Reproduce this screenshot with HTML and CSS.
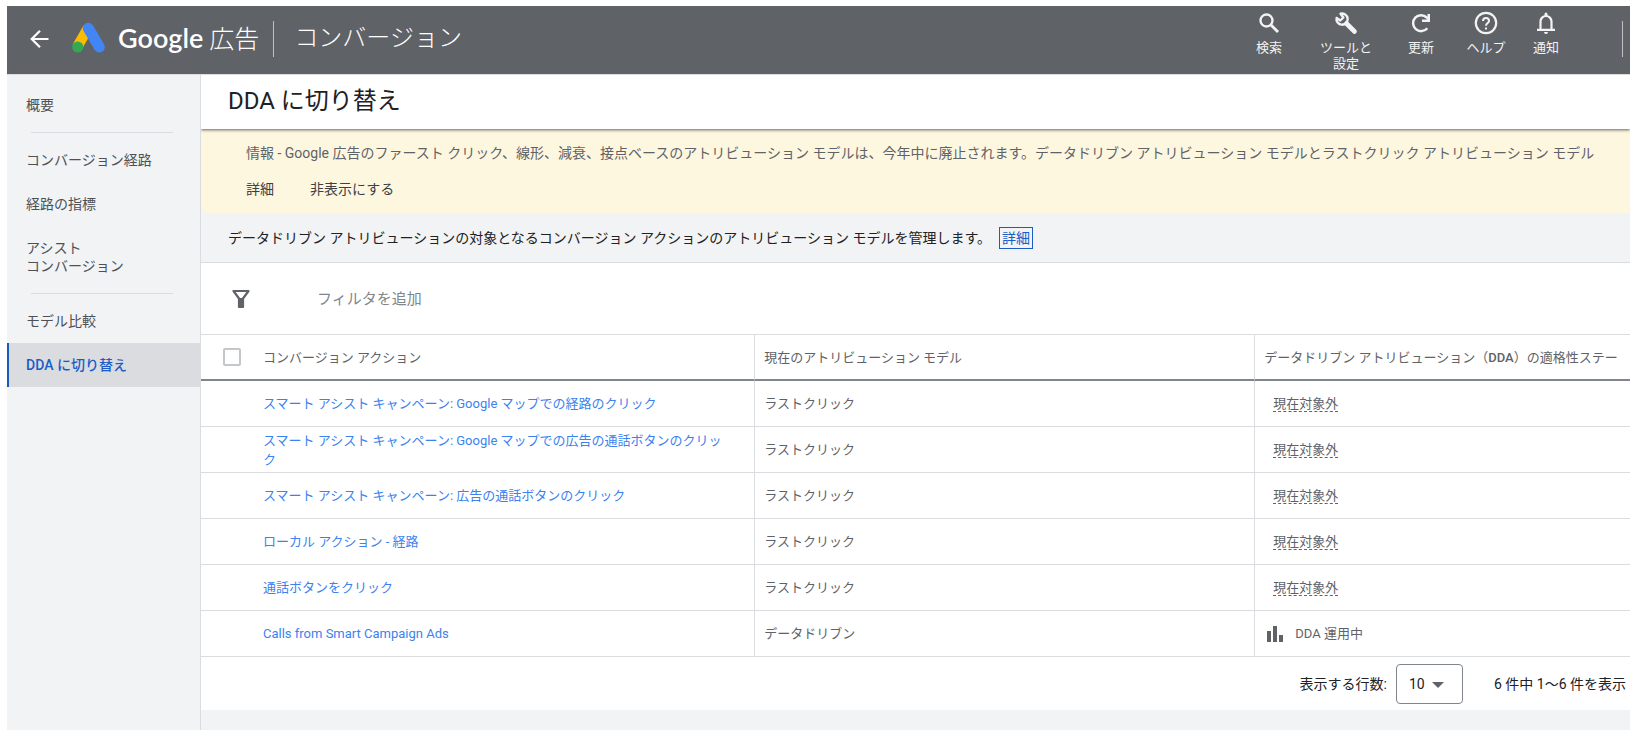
FILE: index.html
```html
<!DOCTYPE html>
<html lang="ja">
<head>
<meta charset="utf-8">
<title>コンバージョン - Google 広告</title>
<link rel="stylesheet" href="styles.css">
</head>
<body>
<header class="topbar">
  <button class="back" aria-label="戻る"><svg width="24" height="24" viewBox="0 0 24 24"><path fill="none" stroke="currentColor" stroke-width="2.2" d="M20.500 12H4M12 3.700 3.700 12l8.300 8.300"/></svg></button>
  <svg class="logo" width="34" height="32" viewBox="0 0 34 32" aria-hidden="true">
    <path d="M5.500 24.500 16 6" stroke="#fbbc04" stroke-width="10.500" fill="none"/>
    <path d="M16.300 6.300 27.300 25" stroke="#4285f4" stroke-width="11" stroke-linecap="round" fill="none"/>
    <circle cx="5.700" cy="25" r="5.600" fill="#34a853"/>
  </svg>
  <span class="brand"><span class="brand-name">Google</span> 広告</span>
  <span class="rule"></span>
  <span class="section">コンバージョン</span>
  <div class="tools">
    <button class="tool tool-search"><svg width="24" height="24" viewBox="0 0 24 24"><circle cx="9.500" cy="9.500" r="6" fill="none" stroke="currentColor" stroke-width="2.400"/><path d="m14 14 7 7" stroke="currentColor" stroke-width="2.800"/></svg>検索</button>
    <button class="tool tool-setup"><svg width="24" height="24" viewBox="0 0 24 24"><path d="M6.500 2.700a5.600 5.600 0 1 1-3.900 4.200l3.700 2.600 3.100-3z" fill="none" stroke="currentColor" stroke-width="2.400" stroke-linejoin="round"/><path d="m12.500 12.500 8 8" stroke="currentColor" stroke-width="4.600" stroke-linecap="round"/></svg>ツールと<br>設定</button>
    <button class="tool tool-refresh"><svg width="24" height="24" viewBox="0 0 24 24"><path d="M18.300 17.200A8 8 0 1 1 17.800 6.500l2 2.200" fill="none" stroke="currentColor" stroke-width="2.500"/><path fill="currentColor" d="M21 3v8h-8v-2.500h5.500V3z"/></svg>更新</button>
    <button class="tool tool-help"><svg width="24" height="24" viewBox="0 0 24 24"><circle cx="12" cy="12" r="10.200" fill="none" stroke="currentColor" stroke-width="2.200"/><path d="M9 10a3 3 0 1 1 6 0c0 2-3 2.200-3 4.800" fill="none" stroke="currentColor" stroke-width="2"/><path d="M11 16.500h2v2h-2z" fill="currentColor"/></svg>ヘルプ</button>
    <button class="tool tool-bell"><svg width="24" height="24" viewBox="0 0 24 24"><path d="M6.500 18.500V10.500a5.500 5.500 0 0 1 11 0v8M3 18.800h18" fill="none" stroke="currentColor" stroke-width="2.200"/><path fill="currentColor" d="M10 21h4a2 2 0 0 1-4 0zM10.500 5V3a1.500 1.500 0 0 1 3 0V5z"/></svg>通知</button>
    <span class="rule rule-end"></span>
  </div>
</header>
<div class="layout">
  <nav class="sidebar">
    <a class="item" href="#">概要</a>
    <hr class="separator">
    <a class="item" href="#">コンバージョン経路</a>
    <a class="item" href="#">経路の指標</a>
    <a class="item" href="#">アシスト<br>コンバージョン</a>
    <hr class="separator">
    <a class="item" href="#">モデル比較</a>
    <a class="item active" href="#" aria-current="page">DDA に切り替え</a>
  </nav>
  <main class="main">
    <h1 class="title">DDA に切り替え</h1>
    <section class="notice">
      <p class="notice-text">情報 - Google 広告のファースト クリック、線形、減衰、接点ベースのアトリビューション モデルは、今年中に廃止されます。データドリブン アトリビューション モデルとラストクリック アトリビューション モデル</p>
      <div class="notice-actions"><button>詳細</button><button>非表示にする</button></div>
    </section>
    <p class="intro">データドリブン アトリビューションの対象となるコンバージョン アクションのアトリビューション モデルを管理します。<a class="more" href="#">詳細</a></p>
    <div class="filter">
      <svg width="20" height="20" viewBox="0 0 20 20" aria-hidden="true"><path d="M2.500 2h15L12 9.500V18H8V9.500z" fill="none" stroke="#5f6368" stroke-width="2.200" stroke-linejoin="round"/><path d="M8 9h4v9H8z" fill="#5f6368"/></svg>
      <input class="filter-input" type="text" placeholder="フィルタを追加" aria-label="フィルタを追加">
    </div>
    <table class="grid">
      <colgroup><col class="col-check"><col class="col-wide"><col class="col-wide"><col></colgroup>
      <thead>
        <tr><th class="check"><input type="checkbox" aria-label="すべて選択"></th><th>コンバージョン アクション</th><th>現在のアトリビューション モデル</th><th>データドリブン アトリビューション（<b>DDA</b>）の適格性ステー</th></tr>
      </thead>
      <tbody>
        <tr><td></td><td><a href="#">スマート アシスト キャンペーン: Google マップでの経路のクリック</a></td><td>ラストクリック</td><td><span class="hint">現在対象外</span></td></tr>
        <tr><td></td><td><a href="#">スマート アシスト キャンペーン: Google マップでの広告の通話ボタンのクリック</a></td><td>ラストクリック</td><td><span class="hint">現在対象外</span></td></tr>
        <tr><td></td><td><a href="#">スマート アシスト キャンペーン: 広告の通話ボタンのクリック</a></td><td>ラストクリック</td><td><span class="hint">現在対象外</span></td></tr>
        <tr><td></td><td><a href="#">ローカル アクション - 経路</a></td><td>ラストクリック</td><td><span class="hint">現在対象外</span></td></tr>
        <tr><td></td><td><a href="#">通話ボタンをクリック</a></td><td>ラストクリック</td><td><span class="hint">現在対象外</span></td></tr>
        <tr><td></td><td><a href="#">Calls from Smart Campaign Ads</a></td><td>データドリブン</td><td><span class="status"><svg width="16" height="16" viewBox="0 0 16 16" aria-hidden="true"><path fill="#5f6368" d="M0 5h4v11H0zM6 0h4v16H6zM12 9h4v7h-4z"/></svg>DDA 運用中</span></td></tr>
      </tbody>
    </table>
    <footer class="pager">
      <label for="rows">表示する行数:</label>
      <span class="select"><select id="rows"><option>10</option><option>30</option><option>50</option></select><svg class="caret" width="12" height="6" viewBox="0 0 12 6" aria-hidden="true"><path fill="#5f6368" d="M0 0h12L6 6z"/></svg></span>
      <span class="range">6 件中 1〜6 件を表示</span>
    </footer>
  </main>
</div>
</body>
</html>
```

FILE: styles.css
```css
* { box-sizing: border-box; }

body {
  display: flex;
  flex-direction: column;
  min-height: 100vh;
  margin: 0;
  padding: 6px 10px 6px 7px;
  background: #fff;
  color: #202124;
  font: 14px/18px Roboto, "Noto Sans CJK JP", sans-serif;
}

button, input, select { font: inherit; color: inherit; }
button { border: 0; padding: 0; background: none; cursor: pointer; }
a { text-decoration: none; }
svg { flex: none; }

.topbar {
  display: flex;
  align-items: flex-start;
  height: 69px;
  padding-left: 21px;
  background: #5f6266;
  border-bottom: 1px solid #dadce0;
  color: #fff;
}
.back { height: 24px; margin-top: 21px; }
.logo { margin: 16px 0 0 20px; }
.brand { margin: 12px 14px 0 12px; font-size: 25px; line-height: 40px; font-weight: 300; white-space: nowrap; }
.brand-name { font-family: Lato, sans-serif; font-size: 27px; font-weight: 600; }
.rule { width: 1px; height: 36px; margin-top: 15px; background: #bdc1c6; }
.section { margin: 12px 0 0 20px; font-size: 24px; line-height: 40px; font-weight: 300; }
.tools { display: flex; align-items: flex-start; margin-left: auto; }
.tool {
  display: flex;
  flex-direction: column;
  align-items: center;
  gap: 5px;
  padding-top: 5px;
  font-size: 13px;
  line-height: 16px;
  color: #f1f3f4;
}
.tool-search { width: 64px; }
.tool-setup { width: 90px; }
.tool-refresh { width: 60px; }
.tool-help { width: 70px; }
.tool-bell { width: 50px; }
.rule-end { margin: 15px 7px 0 51px; }

.layout { display: flex; flex: 1; }
.sidebar {
  flex: none;
  width: 194px;
  padding-top: 8px;
  background: #f1f3f4;
  border-right: 1px solid #dadce0;
}
.item {
  display: block;
  padding: 13px 17px;
  border-left: 2px solid transparent;
  color: #4d5156;
}
.active { background: #dadce0; border-color: #185abc; color: #1a5dc8; font-weight: 500; }
.separator { height: 1px; margin: 5px 27px 5px 24px; border: 0; background: #dadce0; }

.main { flex: 1; min-width: 0; background: #f1f3f4; }
.title {
  position: relative;
  margin: 0;
  padding: 6px 27px 8px;
  background: #fff;
  box-shadow: 0 1px 3px rgba(32, 33, 36, 0.7);
  clip-path: inset(0 0 -6px 0);
  font-size: 24px;
  line-height: 40px;
  font-weight: 400;
}
.notice {
  padding: 15px 0 15px 45px;
  overflow: hidden;
  background: #fef7e0;
  border-bottom-left-radius: 8px;
  color: #5f6368;
}
.notice-text { margin: 0; white-space: nowrap; }
.notice-actions { display: flex; gap: 36px; margin-top: 18px; color: #3c4043; }
.intro { display: flex; align-items: center; gap: 8px; height: 50px; margin: 0; padding: 0 27px; border-bottom: 1px solid #dadce0; }
.more { padding: 1px 2px; border: 1px solid #1a5dc8; color: #1a5dc8; }
.filter { display: flex; align-items: center; height: 71px; padding-left: 30px; background: #fff; }
.filter-input { flex: 1; margin-left: 66px; padding: 0; border: 0; outline: 0; background: none; font-size: 15px; }
.filter-input::placeholder { color: #80868b; opacity: 1; }

.grid { width: 100%; table-layout: fixed; border-collapse: separate; border-spacing: 0; background: #fff; color: #5f6368; font-size: 13px; line-height: 19px; }
.col-check { width: 53px; }
.col-wide { width: 35%; }
.grid th, .grid td { height: 46px; padding: 0 24px 0 9px; border-bottom: 1px solid #dadce0; text-align: left; }
.grid th { height: 47px; border-top: 1px solid #dadce0; border-bottom: 2px solid #80868b; font-weight: 400; white-space: nowrap; }
.grid th b { font-weight: 500; }
.grid th:nth-child(n+3), .grid td:nth-child(n+3) { border-left: 1px solid #dadce0; }
.grid th:last-child { padding-right: 0; }
.grid a { color: #3b82f0; }
.grid th.check { padding: 0 0 0 22px; }
.check input { display: block; width: 18px; height: 18px; margin: 0; appearance: none; border: 2px solid #c4c7c9; border-radius: 2px; }
.hint { margin-left: 9px; border-bottom: 1px dashed #5f6368; }
.status { display: flex; align-items: center; gap: 12px; padding-left: 3px; }

.pager { display: flex; align-items: center; justify-content: flex-end; height: 53px; padding-right: 4px; background: #fff; }
.select { position: relative; margin: 0 31px 0 9px; }
.select select { display: block; width: 67px; height: 40px; padding: 0 12px; appearance: none; border: 1px solid #80868b; border-radius: 4px; background: #fff; }
.caret { position: absolute; top: 18px; right: 19px; pointer-events: none; }
```
